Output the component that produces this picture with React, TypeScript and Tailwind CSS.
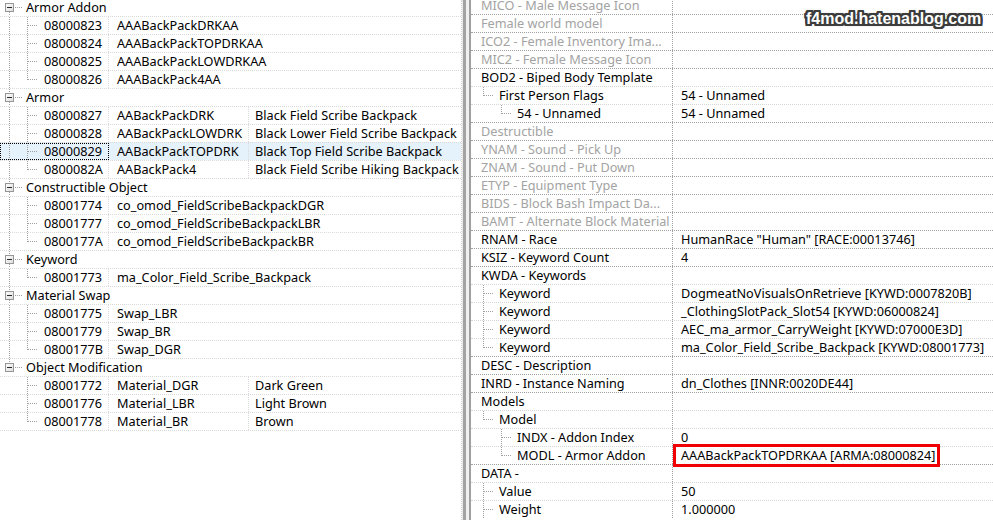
import React from "react";

type LRow =
  | { kind: "group"; label: string; first?: boolean; last?: boolean }
  | {
      kind: "item";
      id: string;
      name: string;
      desc?: string;
      lastChild?: boolean;
      outer: boolean;
      selected?: boolean;
    };

const leftRows: LRow[] = [
  { kind: "group", label: "Armor Addon", first: true },
  { kind: "item", id: "08000823", name: "AAABackPackDRKAA", outer: true },
  { kind: "item", id: "08000824", name: "AAABackPackTOPDRKAA", outer: true },
  { kind: "item", id: "08000825", name: "AAABackPackLOWDRKAA", outer: true },
  { kind: "item", id: "08000826", name: "AAABackPack4AA", outer: true, lastChild: true },
  { kind: "group", label: "Armor" },
  { kind: "item", id: "08000827", name: "AABackPackDRK", desc: "Black Field Scribe Backpack", outer: true },
  { kind: "item", id: "08000828", name: "AABackPackLOWDRK", desc: "Black Lower Field Scribe Backpack", outer: true },
  { kind: "item", id: "08000829", name: "AABackPackTOPDRK", desc: "Black Top Field Scribe Backpack", outer: true, selected: true },
  { kind: "item", id: "0800082A", name: "AABackPack4", desc: "Black Field Scribe Hiking Backpack", outer: true, lastChild: true },
  { kind: "group", label: "Constructible Object" },
  { kind: "item", id: "08001774", name: "co_omod_FieldScribeBackpackDGR", outer: true },
  { kind: "item", id: "08001777", name: "co_omod_FieldScribeBackpackLBR", outer: true },
  { kind: "item", id: "0800177A", name: "co_omod_FieldScribeBackpackBR", outer: true, lastChild: true },
  { kind: "group", label: "Keyword" },
  { kind: "item", id: "08001773", name: "ma_Color_Field_Scribe_Backpack", outer: true, lastChild: true },
  { kind: "group", label: "Material Swap" },
  { kind: "item", id: "08001775", name: "Swap_LBR", outer: true },
  { kind: "item", id: "08001779", name: "Swap_BR", outer: true },
  { kind: "item", id: "0800177B", name: "Swap_DGR", outer: true, lastChild: true },
  { kind: "group", label: "Object Modification", last: true },
  { kind: "item", id: "08001772", name: "Material_DGR", desc: "Dark Green", outer: false },
  { kind: "item", id: "08001776", name: "Material_LBR", desc: "Light Brown", outer: false },
  { kind: "item", id: "08001778", name: "Material_BR", desc: "Brown", outer: false, lastChild: true },
];

type RRow = {
  label: string;
  value?: string;
  level: 0 | 1 | 2;
  gray?: boolean;
  last?: boolean;
  boxed?: boolean;
};

const rightRows: RRow[] = [
  { label: "MICO - Male Message Icon", level: 0, gray: true },
  { label: "Female world model", level: 0, gray: true },
  { label: "ICO2 - Female Inventory Ima...", level: 0, gray: true },
  { label: "MIC2 - Female Message Icon", level: 0, gray: true },
  { label: "BOD2 - Biped Body Template", level: 0 },
  { label: "First Person Flags", value: "54 - Unnamed", level: 1, last: true },
  { label: "54 - Unnamed", value: "54 - Unnamed", level: 2, last: true },
  { label: "Destructible", level: 0, gray: true },
  { label: "YNAM - Sound - Pick Up", level: 0, gray: true },
  { label: "ZNAM - Sound - Put Down", level: 0, gray: true },
  { label: "ETYP - Equipment Type", level: 0, gray: true },
  { label: "BIDS - Block Bash Impact Da...", level: 0, gray: true },
  { label: "BAMT - Alternate Block Material", level: 0, gray: true },
  { label: "RNAM - Race", value: 'HumanRace "Human" [RACE:00013746]', level: 0 },
  { label: "KSIZ - Keyword Count", value: "4", level: 0 },
  { label: "KWDA - Keywords", level: 0 },
  { label: "Keyword", value: "DogmeatNoVisualsOnRetrieve [KYWD:0007820B]", level: 1 },
  { label: "Keyword", value: "_ClothingSlotPack_Slot54 [KYWD:06000824]", level: 1 },
  { label: "Keyword", value: "AEC_ma_armor_CarryWeight [KYWD:07000E3D]", level: 1 },
  { label: "Keyword", value: "ma_Color_Field_Scribe_Backpack [KYWD:08001773]", level: 1, last: true },
  { label: "DESC - Description", level: 0 },
  { label: "INRD - Instance Naming", value: "dn_Clothes [INNR:0020DE44]", level: 0 },
  { label: "Models", level: 0 },
  { label: "Model", level: 1, last: true },
  { label: "INDX - Addon Index", value: "0", level: 2 },
  { label: "MODL - Armor Addon", value: "AAABackPackTOPDRKAA [ARMA:08000824]", level: 2, last: true, boxed: true },
  { label: "DATA -", level: 0 },
  { label: "Value", value: "50", level: 1 },
  { label: "Weight", value: "1.000000", level: 1 },
];

const LINE = "#a0a0a0";

function Dotted({ x1, y1, x2, y2 }: { x1: number; y1: number; x2: number; y2: number }) {
  return (
    <line
      x1={x1}
      y1={y1}
      x2={x2}
      y2={y2}
      stroke={LINE}
      strokeWidth={1}
      strokeDasharray="1 1"
      shapeRendering="crispEdges"
    />
  );
}

function GroupGlyph({ first, last }: { first?: boolean; last?: boolean }) {
  return (
    <svg width={26} height={17} className="shrink-0 block">
      {!first && <Dotted x1={9.5} y1={0} x2={9.5} y2={4} />}
      {!last && <Dotted x1={9.5} y1={13} x2={9.5} y2={17} />}
      <defs>
        <linearGradient id="bx" x1="0" y1="0" x2="1" y2="1">
          <stop offset="0" stopColor="#ffffff" />
          <stop offset="1" stopColor="#dcdcdc" />
        </linearGradient>
      </defs>
      <rect x={5.5} y={4.5} width={8} height={8} fill="url(#bx)" stroke="#969696" shapeRendering="crispEdges" />
      <line x1={7} y1={8.5} x2={12} y2={8.5} stroke="#2b2b2b" shapeRendering="crispEdges" />
      <Dotted x1={15} y1={8.5} x2={23} y2={8.5} />
    </svg>
  );
}

function ItemGlyph({ outer, last }: { outer: boolean; last?: boolean }) {
  return (
    <svg width={44} height={17} className="shrink-0 block">
      {outer && <Dotted x1={9.5} y1={0} x2={9.5} y2={17} />}
      <Dotted x1={27.5} y1={0} x2={27.5} y2={last ? 9 : 17} />
      <Dotted x1={28} y1={8.5} x2={37} y2={8.5} />
    </svg>
  );
}

function RightGlyph({ level, last }: { level: 1 | 2; last?: boolean }) {
  const vx = level === 1 ? 12.5 : 30.5;
  const w = level === 1 ? 28 : 46;
  return (
    <svg width={w} height={17} className="shrink-0 block">
      <Dotted x1={vx} y1={0} x2={vx} y2={last ? 9 : 17} />
      <Dotted x1={vx + 0.5} y1={8.5} x2={vx + 10} y2={8.5} />
    </svg>
  );
}

function LeftPanel() {
  return (
    <div className="w-[462px] h-full shrink-0 overflow-hidden border-r border-dotted border-[#d4d4d4]">
      <div className="-mt-[2px] flex flex-col border-b border-dotted border-[#dadada]">
        {leftRows.map((r, i) =>
          r.kind === "group" ? (
            <div key={i} className="flex h-[18px] border-t border-dotted border-[#dadada]">
              <GroupGlyph first={r.first} last={r.last} />
              <span className="leading-[17px] whitespace-nowrap">{r.label}</span>
            </div>
          ) : (
            <div
              key={i}
              className={`flex h-[18px] border-t border-dotted border-[#dadada] ${r.selected ? "bg-[#e5f1fb]" : ""}`}
            >
              <div
                className={`w-[109px] shrink-0 flex border-r border-dotted border-[#dadada] ${
                  r.selected ? "outline outline-1 outline-dotted outline-black outline-offset-[-1px]" : ""
                }`}
              >
                <ItemGlyph outer={r.outer} last={r.lastChild} />
                <span className="leading-[17px] whitespace-nowrap">{r.id}</span>
              </div>
              {r.desc ? (
                <>
                  <div className="w-[140px] shrink-0 pl-[8px] leading-[17px] whitespace-nowrap border-r border-dotted border-[#dadada]">
                    {r.name}
                  </div>
                  <div className="flex-1 pl-[6px] leading-[17px] whitespace-nowrap">{r.desc}</div>
                </>
              ) : (
                <div className="flex-1 pl-[8px] leading-[17px] whitespace-nowrap">{r.name}</div>
              )}
            </div>
          )
        )}
      </div>
    </div>
  );
}

function Splitter() {
  return (
    <div className="flex h-full shrink-0">
      <div className="w-[1px] bg-[#e8e8e8]" />
      <div className="w-[3px] bg-[#a3a3a3]" />
      <div className="w-[3px] bg-[#f0f0f0]" />
      <div className="w-[2px] bg-[#a0a0a0]" />
    </div>
  );
}

function RightPanel() {
  return (
    <div className="flex-1 h-full overflow-hidden">
      <div className="-mt-[4px] flex flex-col">
        {rightRows.map((r, i) => (
          <div
            key={i}
            className={`flex h-[18px] border-t border-dotted ${r.level === 0 ? "border-[#a0a0a0]" : "border-[#d6d6d6]"}`}
          >
            <div className="w-[202px] shrink-0 flex border-r border-dotted border-[#a0a0a0] overflow-hidden">
              {r.level === 0 ? (
                <div className="w-[10px] shrink-0" />
              ) : (
                <RightGlyph level={r.level} last={r.last} />
              )}
              <span
                className={`leading-[17px] whitespace-nowrap ${r.gray ? "text-[#a3a3a3]" : "text-black"}`}
              >
                {r.label}
              </span>
            </div>
            <div className="relative flex-1 pl-[8px] leading-[17px] whitespace-nowrap">
              {r.value}
              {r.boxed && (
                <span className="absolute left-0 top-[-3px] w-[267px] h-[23px] border-[3px] border-[#f00000]" />
              )}
            </div>
          </div>
        ))}
      </div>
    </div>
  );
}

export default function App() {
  const shadow =
    "[text-shadow:-2px_-2px_0_#3c3c3c,0_-2px_0_#3c3c3c,2px_-2px_0_#3c3c3c,-2px_0_0_#3c3c3c,2px_0_0_#3c3c3c,-2px_2px_0_#3c3c3c,0_2px_0_#3c3c3c,2px_2px_0_#3c3c3c,-1px_-2px_0_#3c3c3c,1px_-2px_0_#3c3c3c,-1px_2px_0_#3c3c3c,1px_2px_0_#3c3c3c,-2px_-1px_0_#3c3c3c,-2px_1px_0_#3c3c3c,2px_-1px_0_#3c3c3c,2px_1px_0_#3c3c3c,0_0_4px_#8a8a8a]";
  return (
    <div className="relative w-[993px] h-[520px] overflow-hidden flex bg-white text-black font-['Noto_Sans',sans-serif] text-[12.7px]">
      <LeftPanel />
      <Splitter />
      <RightPanel />
      <div
        className={`absolute left-[806px] top-[9px] font-['Liberation_Sans',Arial,sans-serif] font-bold text-[16px] leading-[20px] text-white whitespace-nowrap ${shadow}`}
      >
        f4mod.hatenablog.com
      </div>
    </div>
  );
}
